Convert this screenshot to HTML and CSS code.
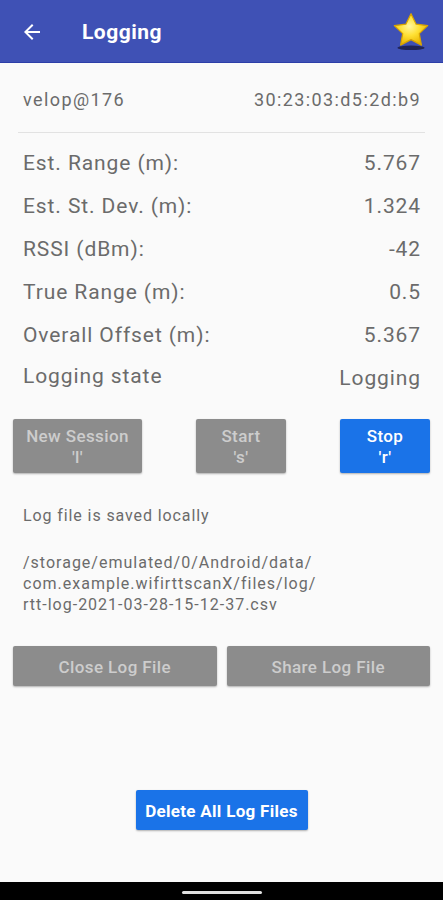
FILE: index.html
```html
<!DOCTYPE html>
<html lang="en">
<head>
    <meta charset="UTF-8">
    <title>Logging</title>
    <link rel="stylesheet" href="styles.css">
</head>
<body>
    <div class="screen">
        <!--=========== app bar ===========-->
        <header class="appbar">
            <svg class="back" width="24" height="24" viewBox="0 0 24 24">
                <path d="M20 11H7.83l5.59-5.59L12 4l-8 8 8 8 1.41-1.41L7.83 13H20v-2z" fill="#fff"/>
            </svg>
            <h1 class="title">Logging</h1>
            <svg class="star" width="42" height="42" viewBox="0 0 40 40">
                <defs>
                    <radialGradient id="sg" cx="45%" cy="40%" r="60%">
                        <stop offset="0" stop-color="#fff6a0"/>
                        <stop offset="0.5" stop-color="#ffe033"/>
                        <stop offset="1" stop-color="#e8b400"/>
                    </radialGradient>
                </defs>
                <ellipse cx="20" cy="36" rx="13" ry="2.2" fill="#1a1a40" opacity="0.8"/>
                <path d="M20 3.5l4.9 10 11 1.4-8 7.6 2 10.9L20 28.2l-9.9 5.2 2-10.9-8-7.6 11-1.4z" fill="url(#sg)" stroke="#d9a400" stroke-width="1.2" stroke-linejoin="round"/>
            </svg>
        </header>

        <main class="content">
            <div class="device">
                <span>velop@176</span>
                <span>30:23:03:d5:2d:b9</span>
            </div>

            <div class="stats">
                <div class="row"><span>Est. Range (m):</span><span>5.767</span></div>
                <div class="row"><span>Est. St. Dev. (m):</span><span>1.324</span></div>
                <div class="row"><span>RSSI (dBm):</span><span>-42</span></div>
                <div class="row"><span>True Range (m):</span><span>0.5</span></div>
                <div class="row"><span>Overall Offset (m):</span><span>5.367</span></div>
                <div class="row state"><span>Logging state</span><span class="val">Logging</span></div>
            </div>

            <div class="controls">
                <button class="btn off wide">New Session<br>'l'</button>
                <button class="btn off">Start<br>'s'</button>
                <button class="btn on">Stop<br>'r'</button>
            </div>

            <p class="note">Log file is saved locally</p>
            <p class="path">/storage/emulated/0/Android/data/<br>com.example.wifirttscanX/files/log/<br>rtt-log-2021-03-28-15-12-37.csv</p>

            <div class="files">
                <button class="btn off">Close Log File</button>
                <button class="btn off">Share Log File</button>
            </div>

            <div class="bottom">
                <button class="btn on">Delete All Log Files</button>
            </div>
        </main>

        <div class="navbar"><span class="pill"></span></div>
    </div>
</body>
</html>
```

FILE: styles.css
```css
* {box-sizing: border-box;}
html, body {margin: 0;padding: 0;}
body {font-family: Roboto, "Liberation Sans", sans-serif;background: #fafafa;}
.screen {width: 443px;height: 900px;display: flex;flex-direction: column;}

/*=========== app bar ===========*/
.appbar {height: 63px;background: #3f51b5;display: flex;align-items: center;padding: 2px 11px 0 20px;border-bottom: 1px solid #2c3ea8;}
.title {margin: 0 0 0 38px;color: #fff;font-size: 21px;font-weight: 700;flex: 1;letter-spacing: .5px;}
.star {margin-top: -3px;}

/*=========== content ===========*/
.content {flex: 1;padding: 0 13px;display: flex;flex-direction: column;color: #6b6b6b;}
.device {display: flex;justify-content: space-between;padding: 26px 5px 0 5px;height: 70px;font-size: 18px;letter-spacing: 1.4px;border-bottom: 1px solid #e2e2e2;margin: 0 5px;}
.device span:last-child {margin-right: -1px;}
.stats {padding: 8px 10px 0 10px;}
.row {display: flex;justify-content: space-between;font-size: 21px;letter-spacing: .9px;height: 43px;align-items: center;}
.row span:last-child {margin-right: -1px;}
.row.state span:first-child {margin-top: -3px;}

.controls {display: flex;justify-content: space-between;margin-top: 20px;}
.btn {border: none;border-radius: 2px;font-family: Roboto, "Liberation Sans", sans-serif;font-size: 17px;font-weight: 500;letter-spacing: .4px;line-height: 21px;height: 54px;padding: 2px 0 0;box-shadow: 0 1px 2px rgba(0,0,0,.3);}
.btn.off {background: #8c8c8c;color: #cdcdcd;}
.btn.on {background: #1a73e8;color: #fff;}
.controls .btn {width: 90px;}
.controls .btn.wide {width: 129px;}

.note {font-size: 16px;letter-spacing: .9px;margin: 33px 0 0 10px;line-height: 20px;}
.path {font-size: 16px;letter-spacing: 1px;margin: 26px 0 0 10px;line-height: 21px;}

.files {display: flex;gap: 10px;margin-top: 31px;}
.files .btn {flex: 1;height: 40px;}

.bottom {flex: 1;display: flex;justify-content: center;align-items: flex-end;padding-bottom: 52px;}
.bottom .btn {height: 40px;width: 172px;font-weight: 700;letter-spacing: .3px;}

/*=========== system nav ===========*/
.navbar {height: 18px;background: #000;display: flex;justify-content: center;align-items: center;}
.pill {width: 80px;height: 3px;border-radius: 2px;background: #e0e0e0;margin-top: 2px;}
```
